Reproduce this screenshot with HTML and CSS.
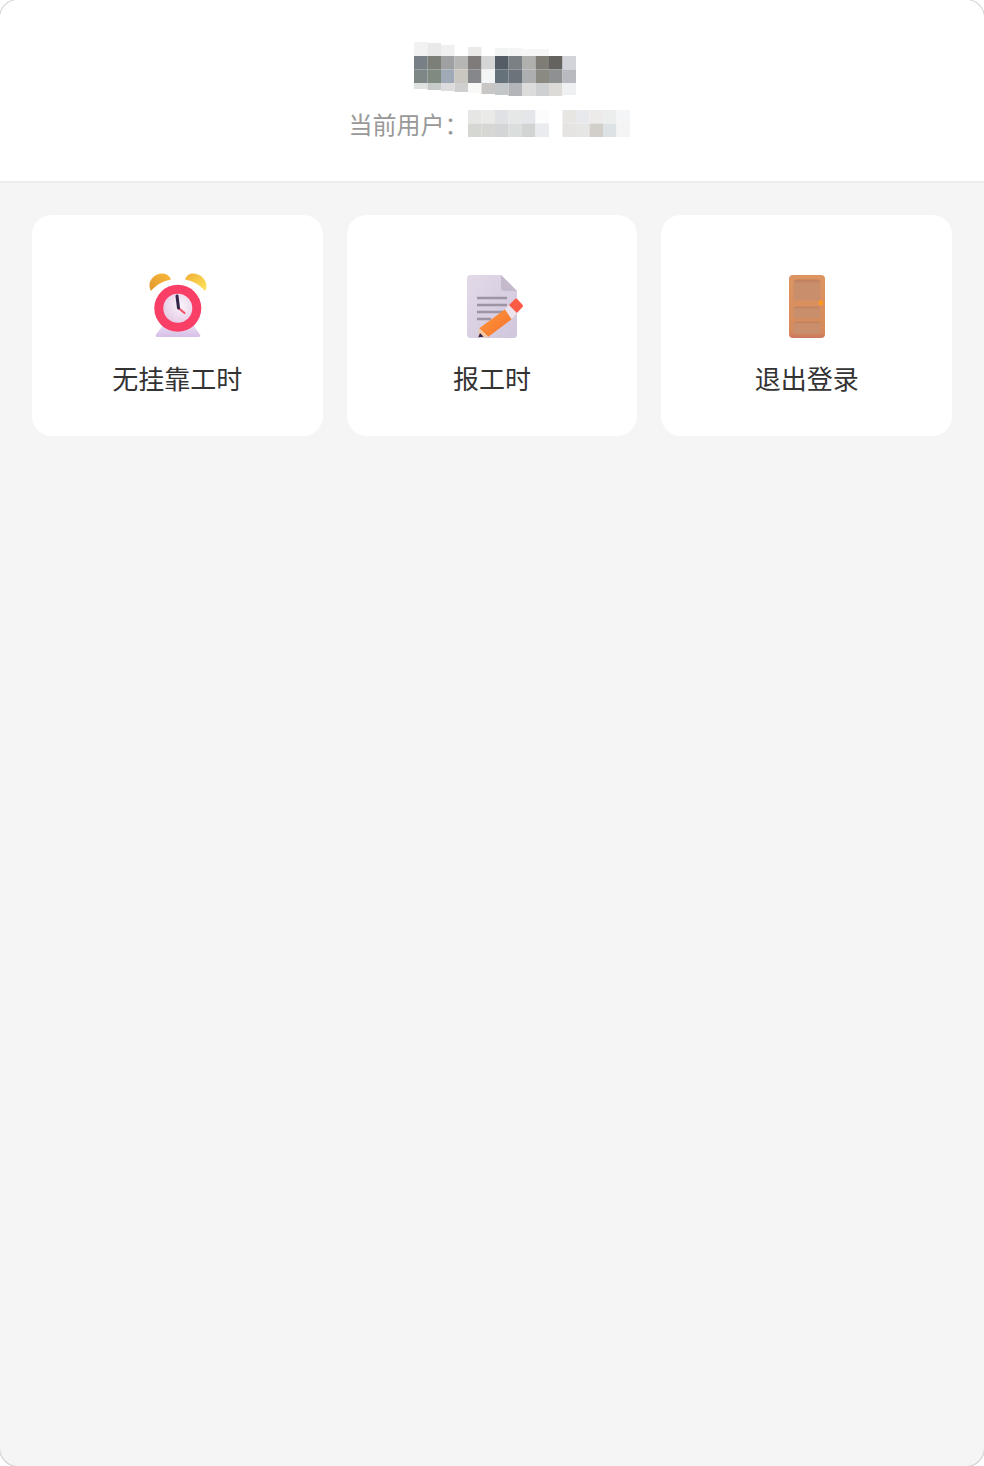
FILE: index.html
```html
<!DOCTYPE html>
<html lang="zh-CN">
<head>
    <meta charset="UTF-8">
    <meta name="viewport" content="width=device-width, initial-scale=1.0">
    <title>工时</title>
    <link rel="stylesheet" href="styles.css">
</head>
<body>
    <div class="app">
        <!-- Header -->
        <div class="header">
            <svg class="mosaic-title" width="162" height="54" viewBox="0 0 162 54" role="img" aria-label="已打码的标题">
                <rect x="0" y="0" width="13.5" height="14" fill="#f2f2f2"/>
                <rect x="13.5" y="1" width="13.5" height="13" fill="#e9e9e9"/>
                <rect x="27" y="3" width="13.5" height="11" fill="#f0f0f0"/>
                <rect x="54" y="5" width="13.5" height="9" fill="#eceae8"/>
                <rect x="81" y="6" width="13.5" height="8" fill="#f2f3f3"/>
                <rect x="94.5" y="6" width="13.5" height="8" fill="#f5f5f5"/>
                <rect x="108" y="7" width="27" height="7" fill="#f6f6f6"/>

                <rect x="0" y="14" width="13.5" height="13.5" fill="#778084"/>
                <rect x="13.5" y="14" width="13.5" height="13.5" fill="#7c7f78"/>
                <rect x="27" y="14" width="13.5" height="13.5" fill="#9ea0a2"/>
                <rect x="40.5" y="14" width="13.5" height="13.5" fill="#b6b6b4"/>
                <rect x="54" y="14" width="13.5" height="13.5" fill="#7f7b7b"/>
                <rect x="67.5" y="14" width="13.5" height="13.5" fill="#d5d5d5"/>
                <rect x="81" y="14" width="13.5" height="13.5" fill="#545d66"/>
                <rect x="94.5" y="14" width="13.5" height="13.5" fill="#7b8084"/>
                <rect x="108" y="14" width="13.5" height="13.5" fill="#b0b0ae"/>
                <rect x="121.5" y="14" width="13.5" height="13.5" fill="#7f7c76"/>
                <rect x="135" y="14" width="13.5" height="13.5" fill="#64635f"/>
                <rect x="148.5" y="14" width="13.5" height="13.5" fill="#d2d4d9"/>

                <rect x="0" y="27.5" width="13.5" height="13.5" fill="#7c8786"/>
                <rect x="13.5" y="27.5" width="13.5" height="13.5" fill="#7f8a80"/>
                <rect x="27" y="27.5" width="13.5" height="13.5" fill="#a0aab6"/>
                <rect x="40.5" y="27.5" width="13.5" height="13.5" fill="#c9c7c0"/>
                <rect x="54" y="27.5" width="13.5" height="13.5" fill="#86878b"/>
                <rect x="67.5" y="27.5" width="13.5" height="13.5" fill="#f4f6f5"/>
                <rect x="81" y="27.5" width="13.5" height="13.5" fill="#65727a"/>
                <rect x="94.5" y="27.5" width="13.5" height="13.5" fill="#6d737b"/>
                <rect x="108" y="27.5" width="13.5" height="13.5" fill="#acaeb0"/>
                <rect x="121.5" y="27.5" width="13.5" height="13.5" fill="#8a8a82"/>
                <rect x="135" y="27.5" width="13.5" height="13.5" fill="#8f9092"/>
                <rect x="148.5" y="27.5" width="13.5" height="13.5" fill="#b8bac0"/>

                <rect x="0" y="41" width="13.5" height="6" fill="#e0e2e2"/>
                <rect x="13.5" y="41" width="13.5" height="7" fill="#c7ccca"/>
                <rect x="27" y="41" width="13.5" height="8" fill="#dcdcde"/>
                <rect x="40.5" y="41" width="13.5" height="9" fill="#cfcfcf"/>
                <rect x="54" y="41" width="13.5" height="10" fill="#f8f8f6"/>
                <rect x="67.5" y="41" width="13.5" height="11" fill="#c8c7c5"/>
                <rect x="81" y="41" width="13.5" height="12" fill="#c4c7c7"/>
                <rect x="94.5" y="41" width="13.5" height="13" fill="#b4b5b9"/>
                <rect x="108" y="41" width="13.5" height="13" fill="#dcdcdc"/>
                <rect x="121.5" y="41" width="13.5" height="13" fill="#cfd0d2"/>
                <rect x="135" y="41" width="13.5" height="13" fill="#dcdbd7"/>
                <rect x="148.5" y="41" width="13.5" height="12" fill="#eef0f2"/>
            </svg>
            <div class="user-line">
                <span class="user-label">当前用户：</span>
                <svg class="mosaic-user" width="162" height="27" viewBox="0 0 162 27" role="img" aria-label="已打码的用户名">
                    <rect x="0" y="0" width="13.5" height="13.5" fill="#e6e6e4"/>
                    <rect x="13.5" y="0" width="13.5" height="13.5" fill="#eaeae8"/>
                    <rect x="27" y="0" width="13.5" height="13.5" fill="#e0e1e4"/>
                    <rect x="40.5" y="0" width="13.5" height="13.5" fill="#e6e8e8"/>
                    <rect x="54" y="0" width="13.5" height="13.5" fill="#e5e6e9"/>
                    <rect x="67.5" y="0" width="13.5" height="13.5" fill="#fcfcfc"/>
                    <rect x="94.5" y="0" width="13.5" height="13.5" fill="#e8e6e3"/>
                    <rect x="108" y="0" width="13.5" height="13.5" fill="#e8e9ed"/>
                    <rect x="121.5" y="0" width="13.5" height="13.5" fill="#ecebe9"/>
                    <rect x="135" y="0" width="13.5" height="13.5" fill="#ebeeed"/>
                    <rect x="148.5" y="0" width="13.5" height="13.5" fill="#f4f5f6"/>

                    <rect x="0" y="13.5" width="13.5" height="13.5" fill="#d5d7d3"/>
                    <rect x="13.5" y="13.5" width="13.5" height="13.5" fill="#d7d8d4"/>
                    <rect x="27" y="13.5" width="13.5" height="13.5" fill="#d3d5d6"/>
                    <rect x="40.5" y="13.5" width="13.5" height="13.5" fill="#dadedd"/>
                    <rect x="54" y="13.5" width="13.5" height="13.5" fill="#d2d3d3"/>
                    <rect x="67.5" y="13.5" width="13.5" height="13.5" fill="#e9ebef"/>
                    <rect x="94.5" y="13.5" width="13.5" height="13.5" fill="#e5e4e2"/>
                    <rect x="108" y="13.5" width="13.5" height="13.5" fill="#e6e6e4"/>
                    <rect x="121.5" y="13.5" width="13.5" height="13.5" fill="#d2cfca"/>
                    <rect x="135" y="13.5" width="13.5" height="13.5" fill="#dde3e5"/>
                    <rect x="148.5" y="13.5" width="13.5" height="13.5" fill="#f4f4f4"/>
                </svg>
            </div>
        </div>

        <!-- Menu cards -->
        <div class="menu">
            <div class="card">
                <svg class="card-icon" width="64" height="68" viewBox="0 0 64 68">
                    <defs>
                        <linearGradient id="bellLeft" x1="0" y1="1" x2="1" y2="0">
                            <stop offset="0" stop-color="#e0982e"/>
                            <stop offset="1" stop-color="#f9b93a"/>
                        </linearGradient>
                        <linearGradient id="bellRight" x1="0" y1="0" x2="1" y2="1">
                            <stop offset="0" stop-color="#f0ae35"/>
                            <stop offset="1" stop-color="#ffe65c"/>
                        </linearGradient>
                        <linearGradient id="clockBase" x1="0" y1="0" x2="0" y2="1">
                            <stop offset="0" stop-color="#eadcf3"/>
                            <stop offset="1" stop-color="#d6bfe8"/>
                        </linearGradient>
                        <radialGradient id="clockFace" cx="0.6" cy="0.4" r="0.7">
                            <stop offset="0" stop-color="#fbf4fb"/>
                            <stop offset="1" stop-color="#e3c8e4"/>
                        </radialGradient>
                    </defs>
                    <path d="M6 19C1 10 9 1 18 1.500c3.500.2 6.500 2.500 8 6C18 9 11 13 6 19z" fill="url(#bellLeft)"/>
                    <path d="M60 19C65 10 56 1 47 1.500c-3.500.2-5.500 2.500-7 6C48 9 55 13 60 19z" fill="url(#bellRight)"/>
                    <path d="M18 53h30l7 9.500c.8 1.300 0 2.500-1.500 2.500h-41c-1.500 0-2.300-1.200-1.500-2.500z" fill="url(#clockBase)"/>
                    <circle cx="32.800" cy="36.300" r="23.500" fill="#fa3f66"/>
                    <circle cx="32.800" cy="36.300" r="14.500" fill="url(#clockFace)"/>
                    <path d="M33.500 36l6 5" stroke="#f0566a" stroke-width="2.200" stroke-linecap="round"/>
                    <path d="M32 24l1.500 12" stroke="#33254a" stroke-width="3" stroke-linecap="round"/>
                </svg>
                <div class="card-title">无挂靠工时</div>
            </div>
            <div class="card">
                <svg class="card-icon" width="64" height="68" viewBox="0 0 64 68">
                    <defs>
                        <linearGradient id="paper" x1="0" y1="0" x2="1" y2="1">
                            <stop offset="0" stop-color="#e2dae8"/>
                            <stop offset="1" stop-color="#d0c6dc"/>
                        </linearGradient>
                        <linearGradient id="pencilBody" x1="0" y1="0" x2="1" y2="1">
                            <stop offset="0" stop-color="#ff9a3e"/>
                            <stop offset="1" stop-color="#f5702a"/>
                        </linearGradient>
                    </defs>
                    <path d="M10 3h31l16 16v44c0 1.700-1.300 3-3 3H10c-1.700 0-3-1.300-3-3V6c0-1.700 1.300-3 3-3z" fill="url(#paper)"/>
                    <path d="M41 3l16 16H44c-1.700 0-3-1.300-3-3z" fill="#c4bacb"/>
                    <path d="M17 26h30M17 33h30M17 40h28M17 47h14" stroke="#9e94a3" stroke-width="2.400"/>
                    <path d="M45 37.300l6.700 10L28.300 64.700l-9-8.400z" fill="url(#pencilBody)"/>
                    <path d="M19.300 56.300l9 8.400-10 .6z" fill="#f3c8a0"/>
                    <path d="M20 61l3.600 3.700-5.300.6z" fill="#35224a"/>
                    <path d="M45 37.300l4-4.300 8 8-5.300 6.300z" fill="#ece4ea"/>
                    <path d="M49 33l6-6c.8-.8 1.500-.8 2.200 0l5.300 5.800c.7.800.7 1.500 0 2.200L57 41z" fill="#fb5a45"/>
                </svg>
                <div class="card-title">报工时</div>
            </div>
            <div class="card">
                <svg class="card-icon" width="64" height="68" viewBox="0 0 64 68">
                    <defs>
                        <linearGradient id="door" x1="0" y1="0" x2="0" y2="1">
                            <stop offset="0" stop-color="#dc9560"/>
                            <stop offset="0.9" stop-color="#d68a5c"/>
                            <stop offset="1" stop-color="#c9775d"/>
                        </linearGradient>
                        <linearGradient id="panel" x1="0" y1="0" x2="0" y2="1">
                            <stop offset="0" stop-color="#bf7d5b"/>
                            <stop offset="0.2" stop-color="#c98e6c"/>
                            <stop offset="1" stop-color="#c98e6c"/>
                        </linearGradient>
                    </defs>
                    <rect x="14" y="3" width="36" height="63" rx="4" fill="url(#door)"/>
                    <rect x="18.500" y="7.500" width="27" height="21" rx="3" fill="url(#panel)"/>
                    <rect x="18.500" y="34.500" width="27" height="12" rx="3" fill="url(#panel)"/>
                    <rect x="18.500" y="49.500" width="27" height="12.500" rx="3" fill="url(#panel)"/>
                    <circle cx="46" cy="31" r="2.400" fill="#ff9a1f"/>
                </svg>
                <div class="card-title">退出登录</div>
            </div>
        </div>
    </div>
</body>
</html>
```

FILE: styles.css
```css
/* Basic Styles */
html, body {
    height: 100%;
}

body {
    margin: 0;
    background-color: #fff;
    font-family: "Noto Sans CJK SC", "Liberation Sans", sans-serif;
    overflow: hidden;
}

.app {
    display: flex;
    flex-direction: column;
    height: 100%;
    background-color: #f5f5f5;
    border-radius: 18px;
    box-shadow: 0 0 0 1px #ccc;
    overflow: hidden;
}

/* Header */
.header {
    display: flex;
    flex-direction: column;
    align-items: center;
    flex: none;
    height: 183px;
    padding-top: 42px;
    box-sizing: border-box;
    background-color: #fff;
    border-bottom: 2px solid #ededed;
}

.mosaic-title {
    display: block;
    margin-left: 6px;
    filter: blur(0.5px);
}

.user-line {
    display: flex;
    align-items: center;
    height: 27px;
    margin-top: 14px;
    margin-right: 6px;
    font-size: 24px;
    line-height: 27px;
    color: #999;
}

.user-label {
    width: 119px;
    white-space: nowrap;
}

.mosaic-user {
    display: block;
    filter: blur(0.5px);
}

/* Menu Cards */
.menu {
    display: grid;
    grid-template-columns: repeat(3, 1fr);
    gap: 24px;
    padding: 32px;
}

.card {
    display: flex;
    flex-direction: column;
    align-items: center;
    height: 221px;
    padding-top: 57px;
    box-sizing: border-box;
    background-color: #fff;
    border-radius: 20px;
}

.card-icon {
    display: block;
    filter: blur(0.4px);
}

.card-title {
    margin-top: 20px;
    font-size: 26px;
    line-height: 36px;
    color: #333;
}
```
